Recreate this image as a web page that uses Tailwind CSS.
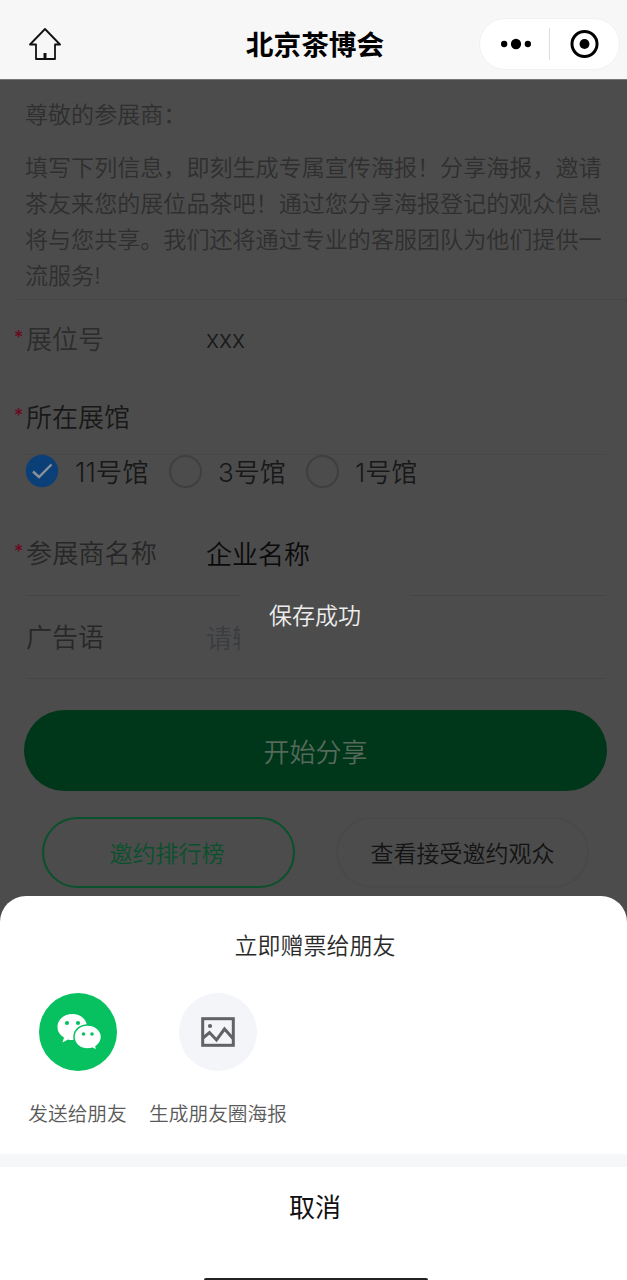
<!DOCTYPE html>
<html lang="zh-CN">

<head>
    <meta charset="UTF-8">
    <meta name="viewport" content="width=device-width, initial-scale=1.0">
    <title>北京茶博会</title>
    <script src="https://cdn.jsdelivr.net/npm/@tailwindcss/browser@4"></script>
</head>

<body class="font-['Inter','Noto_Sans_CJK_SC',sans-serif] font-[350]">
    <div class="relative flex flex-col w-[627px] h-[1280px] overflow-hidden bg-[#4c4c4c]">

        <!-- Nav bar -->
        <header class="flex items-center justify-between h-[79px] shrink-0 pt-2 pl-[29px] pr-[7px] bg-[#f7f7f7]">
            <svg class="w-8 h-8" viewBox="0 0 32 32" fill="none" stroke="#111" stroke-width="1.800" stroke-linejoin="round">
                <path d="M16 1 L31 16.500 H26 V31 H7 V16.500 H1 Z" />
                <path d="M16 31 V25" stroke-width="3" />
            </svg>
            <h1 class="ml-[90px] mt-0.5 text-[27.700px] leading-9 font-bold text-black whitespace-nowrap">北京茶博会</h1>
            <div class="flex items-center w-[141px] h-[52px] rounded-full bg-white border border-[#f1f1f1]">
                <svg class="w-[72px] h-8" viewBox="0 0 72 32">
                    <circle cx="24.500" cy="16" r="3.200" />
                    <circle cx="36.500" cy="16" r="5.200" />
                    <circle cx="48.500" cy="16" r="3.200" />
                </svg>
                <div class="w-px h-8 -ml-0.5 bg-[#dedede]"></div>
                <svg class="w-[70px] h-8" viewBox="0 0 70 32">
                    <circle cx="35" cy="16" r="12.700" fill="none" stroke="#000" stroke-width="3" />
                    <circle cx="35" cy="16" r="5" />
                </svg>
            </div>
        </header>

        <!-- Intro -->
        <section class="h-[220px] shrink-0 pt-[17px] px-[25px] text-[23.070px] leading-9 text-[#2f2f2f] border-t border-[#777]">
            <p>尊敬的参展商：</p>
            <p class="mt-[17px] -mr-2">填写下列信息，即刻生成专属宣传海报！分享海报，邀请<br>茶友来您的展位品茶吧！通过您分享海报登记的观众信息<br>将与您共享。我们还将通过专业的客服团队为他们提供一<br>流服务!</p>
        </section>

        <!-- Form -->
        <section class="h-[381px] shrink-0 text-[26px] leading-10 text-[#181818]">
            <div class="flex h-[79px] pt-5 ml-[15px] border-t border-[#464646]">
                <span class="w-[11px] -ml-px text-lg leading-9 font-medium text-[#6b0a1e]">*</span>
                <span class="w-[180px] ml-px text-[#2c2c2c]">展位号</span>
                <span class="text-[24.500px] leading-[38px]">xxx</span>
            </div>
            <div class="flex h-[76px] pt-5 ml-[15px]">
                <span class="w-[11px] -ml-px text-lg leading-9 font-medium text-[#6b0a1e]">*</span>
                <span class="ml-px">所在展馆</span>
            </div>
            <div class="flex items-center h-9 ml-[25px] mr-[21px] border-t border-[#474747] whitespace-nowrap">
                <svg class="w-[34px] h-[34px] mr-4 -mt-[3px]" viewBox="0 0 34 34">
                    <circle cx="17" cy="17" r="16.200" fill="#0b3f78" />
                    <path d="M8 17.500 L14 23 L26.500 10.500" fill="none" stroke="#8a9299" stroke-width="2.400" />
                </svg>
                <span class="w-[94px] -mt-px text-[26.400px]">11号馆</span>
                <div class="w-[33px] h-[33px] mr-4 -mt-0.5 rounded-full border-2 border-[#3f3f3f]"></div>
                <span class="w-[88px]">3号馆</span>
                <div class="w-[33px] h-[33px] mr-4 -mt-0.5 rounded-full border-2 border-[#3f3f3f]"></div>
                <span>1号馆</span>
            </div>
            <div class="flex h-[105px] pt-11 ml-[15px]">
                <span class="w-[11px] -ml-px text-lg leading-9 font-medium text-[#6b0a1e]">*</span>
                <span class="w-[180px] ml-px text-[26.200px] text-[#272727]">参展商名称</span>
                <span class="pt-px text-[#0a0a0a]">企业名称</span>
            </div>
            <div class="flex h-[84px] ml-[26px] mr-[21px] pt-[22px] border-y border-[#454545]">
                <span class="w-[180px] text-[#272727]">广告语</span>
                <span class="pt-px text-[#3a3c40]">请输入</span>
            </div>
        </section>

        <!-- Actions -->
        <section class="pt-[30px] px-6">
            <button class="block w-[583px] h-[81px] pt-[3px] rounded-full bg-[#003619] text-[26px] font-[350] text-[#56695b]">开始分享</button>
            <div class="flex justify-between mt-[26px] ml-[18px] mr-[17px] text-[23px]">
                <button class="w-[253px] h-[71px] pt-[3px] pr-[3px] rounded-full border-2 border-[#09512d] text-[#09512d]">邀约排行榜</button>
                <button class="w-[253px] h-[71px] pt-[3px] -mr-[3px] rounded-full border-2 border-[#494949] text-[#131313]">查看接受邀约观众</button>
            </div>
        </section>

        <!-- Toast -->
        <div class="absolute left-[240px] top-[575px] flex items-center justify-center w-[170px] h-[82px] pr-5 pt-px bg-[#4c4c4c] text-[23px] text-[#ededed]">保存成功</div>

        <!-- Share sheet -->
        <div class="absolute left-0 bottom-0 flex flex-col w-full h-[384px] rounded-t-[26px] bg-white">
            <h2 class="pt-8 pl-[3px] text-[23px] leading-9 text-center text-[#2a2a2a]">立即赠票给朋友</h2>
            <div class="flex gap-[22px] pt-[29px] pl-7 text-[19.700px] leading-7 text-[#5a5a5a] whitespace-nowrap">
                <div class="flex flex-col items-center w-[99px]">
                    <div class="flex items-center justify-center w-[78px] h-[78px] rounded-full bg-[#07c160]">
                        <svg class="w-[46px] h-[38px] ml-0.5" viewBox="0 0 46 38">
                            <path d="M16.500 1 C8 1 1.500 6.500 1.500 14 C1.500 18.500 4 22 8 24.500 L6.500 29.500 L12 26.500 C13 27 15 27 17 27 C25 26 31 21 31 14 C31 6.500 24.500 1 16.500 1 Z" fill="#fff" />
                            <path d="M31.500 12 C24 12 18 17 18 24 C18 31 24 36 31.500 36 C33.500 36 35 35.700 36.500 35.200 L41 37.500 L40 33.500 C43.500 31 45.500 28 45.500 24 C45.500 17 39 12 31.500 12 Z" fill="#fff" stroke="#07c160" stroke-width="1.500" />
                            <g fill="#07c160">
                                <circle cx="11" cy="10" r="2.100" />
                                <circle cx="22" cy="10" r="2.100" />
                                <circle cx="27.500" cy="21" r="1.800" />
                                <circle cx="36" cy="21" r="1.800" />
                            </g>
                        </svg>
                    </div>
                    <span class="mt-[29px]">发送给朋友</span>
                </div>
                <div class="flex flex-col items-center w-[138px]">
                    <div class="flex items-center justify-center w-[78px] h-[78px] rounded-full bg-[#f3f5f8]">
                        <svg class="w-[34px] h-[30px]" viewBox="0 0 34 30" fill="none" stroke="#606266" stroke-width="3">
                            <rect x="1.700" y="1.700" width="30.600" height="26.600" />
                            <path d="M2 21 L8.500 15.500 L15.500 23 L23.500 12 L32 21.500" />
                            <circle cx="9" cy="9" r="2.100" fill="#606266" stroke="none" />
                        </svg>
                    </div>
                    <span class="mt-[29px]">生成朋友圈海报</span>
                </div>
            </div>
            <div class="h-[13px] mt-[26px] bg-[#f6f7f9]"></div>
            <button class="h-[80px] pt-px pl-[3px] text-[26px] font-normal text-[#111]">取消</button>
            <!-- Home indicator -->
            <div class="w-[224px] h-0.5 mt-auto ml-[204px] rounded-t-full bg-[#222]"></div>
        </div>
    </div>
</body>

</html>
